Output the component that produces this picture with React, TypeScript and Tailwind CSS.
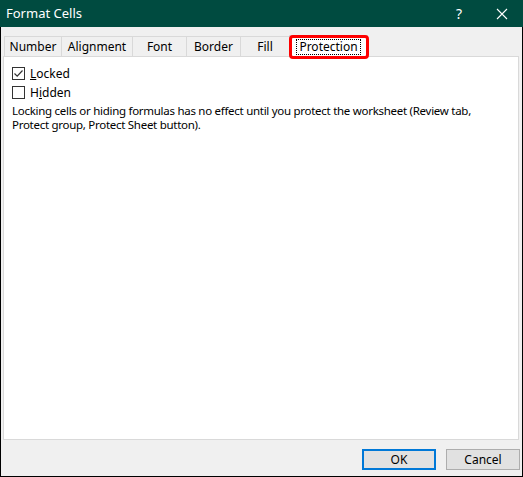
const font = { fontFamily: '"Segoe UI", "Noto Sans", "Liberation Sans", sans-serif' };

const tabs = [
  { label: "Number", w: "w-[57px]" },
  { label: "Alignment", w: "w-[71px]" },
  { label: "Font", w: "w-[54px]" },
  { label: "Border", w: "w-[54px]" },
  { label: "Fill", w: "w-[49px]" },
];

function CheckBox({ checked }: { checked?: boolean }) {
  return (
    <div className="w-[13px] h-[13px] border border-[#333] bg-white flex items-center justify-center">
      {checked && (
        <svg width="11" height="11" viewBox="0 0 11 11">
          <path d="M1.5 5.5 L4.2 8.2 L9.5 2.5" fill="none" stroke="#333" strokeWidth="1.2" />
        </svg>
      )}
    </div>
  );
}

export default function App() {
  return (
    <div
      className="w-[523px] h-[477px] flex flex-col bg-[#f0f0f0] border-x border-b border-black text-[12px] text-black"
      style={font}
    >
      {/* title bar */}
      <div className="h-[27px] bg-[#004b40] flex items-center text-white shrink-0 -mx-px">
        <span className="pl-[6px] text-[13px]">Format Cells</span>
        <span className="ml-auto mr-[34px] text-[14px]">?</span>
        <svg width="12" height="12" viewBox="0 0 12 12" className="mr-[15px]">
          <path d="M1 1 L11 11 M11 1 L1 11" stroke="white" strokeWidth="1.1" />
        </svg>
      </div>

      {/* tab strip */}
      <div className="flex pl-[3px] mt-[9px] h-[20px] items-end relative z-10">
        {tabs.map((t) => (
          <div
            key={t.label}
            className={`${t.w} h-[20px] flex items-center justify-center border-l border-t border-[#d9d9d9]`}
          >
            {t.label}
          </div>
        ))}
        <div className="relative w-[79px] h-[22px] -mb-px bg-white border-x border-t border-[#d9d9d9] flex items-center justify-center">
          <span className="px-[2px] leading-[14px] border border-dotted border-black">Protection</span>
          <div className="absolute -left-[1px] -top-[1px] w-[80px] h-[24px] border-[3px] border-[#ff0000] rounded-[4px]" />
        </div>
      </div>

      {/* content panel */}
      <div className="mx-[2px] mr-[3px] h-[384px] bg-white border border-[#d9d9d9] px-[8px] pt-[10px]">
        <div className="flex items-center gap-[5px] h-[13px]">
          <CheckBox checked />
          <span>
            <u>L</u>ocked
          </span>
        </div>
        <div className="flex items-center gap-[5px] h-[13px] mt-[6px]">
          <CheckBox />
          <span>
            H<u>i</u>dden
          </span>
        </div>
        <p className="mt-[5px] leading-[14px] whitespace-nowrap text-[11.5px] tracking-[-0.28px]">
          Locking cells or hiding formulas has no effect until you protect the worksheet (Review tab,
          <br />
          Protect group, Protect Sheet button).
        </p>
      </div>

      {/* buttons */}
      <div className="flex justify-end gap-[10px] pr-[2px] pt-[9px]">
        <button className="w-[74px] h-[21px] bg-[#e1e1e1] border-2 border-[#0078d7] flex items-center justify-center">
          OK
        </button>
        <button className="w-[74px] h-[21px] bg-[#e1e1e1] border border-[#adadad] flex items-center justify-center">
          Cancel
        </button>
      </div>
    </div>
  );
}
